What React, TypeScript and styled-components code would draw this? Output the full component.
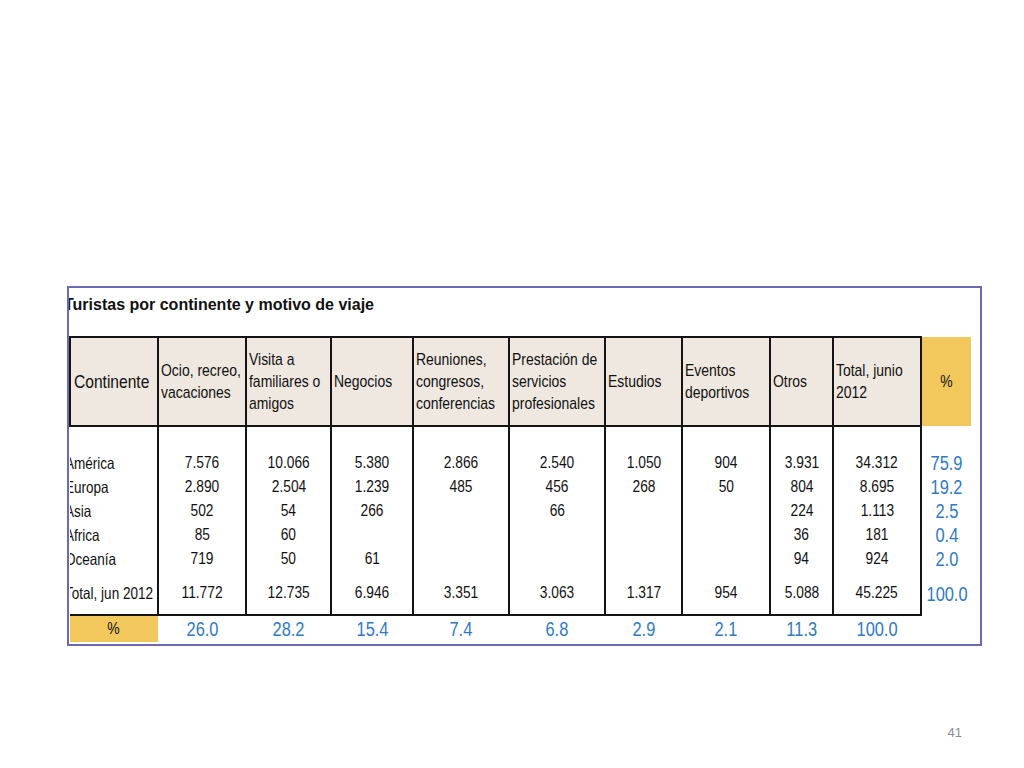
import React from 'react'
import styled, { createGlobalStyle } from 'styled-components'

const GlobalStyle = createGlobalStyle`
  html, body {
    margin: 0;
    padding: 0;
    background: #ffffff;
  }
  body {
    font-family: "Liberation Sans", Arial, sans-serif;
  }
`

type Row = {
  name: string
  values: string[]
  pct: string
  total?: boolean
}

type Pad = 'first' | 'mid' | 'total'

const headers = [
  { label: 'Continente', big: true },
  { label: 'Ocio, recreo,\nvacaciones' },
  { label: 'Visita a\nfamiliares o\namigos' },
  { label: 'Negocios' },
  { label: 'Reuniones,\ncongresos,\nconferencias' },
  { label: 'Prestación de\nservicios\nprofesionales' },
  { label: 'Estudios' },
  { label: 'Eventos\ndeportivos' },
  { label: 'Otros' },
  { label: 'Total, junio\n2012' }
]

const rows: Row[] = [
  { name: 'América', values: ['7.576', '10.066', '5.380', '2.866', '2.540', '1.050', '904', '3.931', '34.312'], pct: '75.9' },
  { name: 'Europa', values: ['2.890', '2.504', '1.239', '485', '456', '268', '50', '804', '8.695'], pct: '19.2' },
  { name: 'Asia', values: ['502', '54', '266', '', '66', '', '', '224', '1.113'], pct: '2.5' },
  { name: 'Africa', values: ['85', '60', '', '', '', '', '', '36', '181'], pct: '0.4' },
  { name: 'Oceanía', values: ['719', '50', '61', '', '', '', '', '94', '924'], pct: '2.0' },
  { name: 'Total, jun 2012', values: ['11.772', '12.735', '6.946', '3.351', '3.063', '1.317', '954', '5.088', '45.225'], pct: '100.0', total: true }
]

const colPct = ['26.0', '28.2', '15.4', '7.4', '6.8', '2.9', '2.1', '11.3', '100.0']

// column widths in px, measured off the sheet
const widths = [88, 88, 85, 82, 96, 96, 77, 88, 63, 88, 50]

const App = () => {
  return (
    <Slide>
      <GlobalStyle />
      <Frame>
        <Title>Turistas por continente y motivo de viaje</Title>
        <Table>
          <colgroup>
            {widths.map((w, i) => (
              <col key={i} style={{ width: w }} />
            ))}
          </colgroup>
          <thead>
            <tr>
              {headers.map(h => (
                <HeadCell key={h.label} $big={h.big}>
                  <Narrow $origin="left">{h.label}</Narrow>
                </HeadCell>
              ))}
              <PctHead>
                <Narrow>%</Narrow>
              </PctHead>
            </tr>
          </thead>
          <tbody>
            {rows.map((r, i) => {
              const pad: Pad = i === 0 ? 'first' : r.total ? 'total' : 'mid'
              return (
                <tr key={r.name}>
                  <NameCell $pad={pad}>
                    <Narrow $origin="left">{r.name}</Narrow>
                  </NameCell>
                  {r.values.map((v, j) => (
                    <NumCell key={j} $pad={pad}>
                      <Narrow>{v}</Narrow>
                    </NumCell>
                  ))}
                  <BluePct $pad={pad}>
                    <Narrow>{r.pct}</Narrow>
                  </BluePct>
                </tr>
              )
            })}
            <tr>
              <PctLabel>
                <Narrow>%</Narrow>
              </PctLabel>
              {colPct.map((v, j) => (
                <FootCell key={j}>
                  <Narrow>{v}</Narrow>
                </FootCell>
              ))}
              <td />
            </tr>
          </tbody>
        </Table>
      </Frame>
      <Footer>
        <PageNo>41</PageNo>
      </Footer>
    </Slide>
  )
}
export default App

const padFor = (p: Pad) =>
  p === 'first' ? '24px 0 0 0' : p === 'total' ? '10px 0 9px 0' : '0'

const Slide = styled.div`
  width: 1024px;
  height: 768px;
  display: flex;
  flex-direction: column;
  box-sizing: border-box;
  padding: 286px 0 0 67px;
`

const Frame = styled.div`
  width: 915px;
  height: 360px;
  box-sizing: border-box;
  border: 2px solid #6e69b4;
  overflow: hidden;
  background: #ffffff;
`

const Title = styled.div`
  height: 48px;
  box-sizing: border-box;
  padding-top: 7px;
  margin-left: -5px;
  font-weight: bold;
  font-size: 16px;
  line-height: 20px;
  color: #111111;
  white-space: nowrap;
`

// the sheet uses a narrow face; squeeze Arial-metric text to match
const Narrow = styled.span<{ $origin?: 'left' | 'center' }>`
  display: inline-block;
  white-space: pre;
  transform: scaleX(0.82);
  transform-origin: ${p => (p.$origin === 'left' ? 'left center' : 'center center')};
`

const Table = styled.table`
  border-collapse: collapse;
  table-layout: fixed;
  width: 901px;
  color: #111111;

  td,
  th {
    padding: 0;
  }
`

const HeadCell = styled.th<{ $big?: boolean }>`
  height: 87px;
  background: #efe8e0;
  border: 2px solid #141414;
  text-align: left;
  vertical-align: middle;
  font-weight: normal;
  font-size: ${p => (p.$big ? '19px' : '17px')};
  line-height: 22px;
  padding: 0 0 0 ${p => (p.$big ? '3px' : '2px')} !important;
  overflow: hidden;
`

const PctHead = styled.th`
  background: #f2c85c;
  font-weight: normal;
  font-size: 17px;
  text-align: center;
  vertical-align: middle;
`

const NameCell = styled.td<{ $pad: Pad }>`
  padding: ${p => padFor(p.$pad)} !important;
  height: 24px;
  line-height: 24px;
  font-size: 16.5px;
  white-space: nowrap;
  border-right: 2px solid #141414;
  border-bottom: ${p => (p.$pad === 'total' ? '2px solid #141414' : 'none')};
  overflow: hidden;

  ${Narrow} {
    margin-left: -5px;
  }
`

const NumCell = styled.td<{ $pad: Pad }>`
  padding: ${p => padFor(p.$pad)} !important;
  height: 24px;
  line-height: 24px;
  font-size: 16.8px;
  text-align: center;
  border-left: 2px solid #141414;
  border-right: 2px solid #141414;
  border-bottom: ${p => (p.$pad === 'total' ? '2px solid #141414' : 'none')};
`

const BluePct = styled.td<{ $pad: Pad }>`
  padding: ${p => padFor(p.$pad)} !important;
  height: 24px;
  line-height: 24px;
  font-size: 20px;
  text-align: center;
  color: #2f7ac6;
`

const PctLabel = styled.td`
  height: 26px;
  background: #f2c85c;
  text-align: center;
  font-size: 17px;
  line-height: 26px;
`

const FootCell = styled.td`
  height: 26px;
  text-align: center;
  font-size: 20px;
  line-height: 26px;
  color: #2f7ac6;
`

const Footer = styled.div`
  flex: 1;
  display: flex;
  justify-content: flex-end;
  align-items: flex-end;
  padding: 0 62px 27px 0;
`

const PageNo = styled.span`
  font-size: 13px;
  line-height: 16px;
  color: #8c8c8c;
`
